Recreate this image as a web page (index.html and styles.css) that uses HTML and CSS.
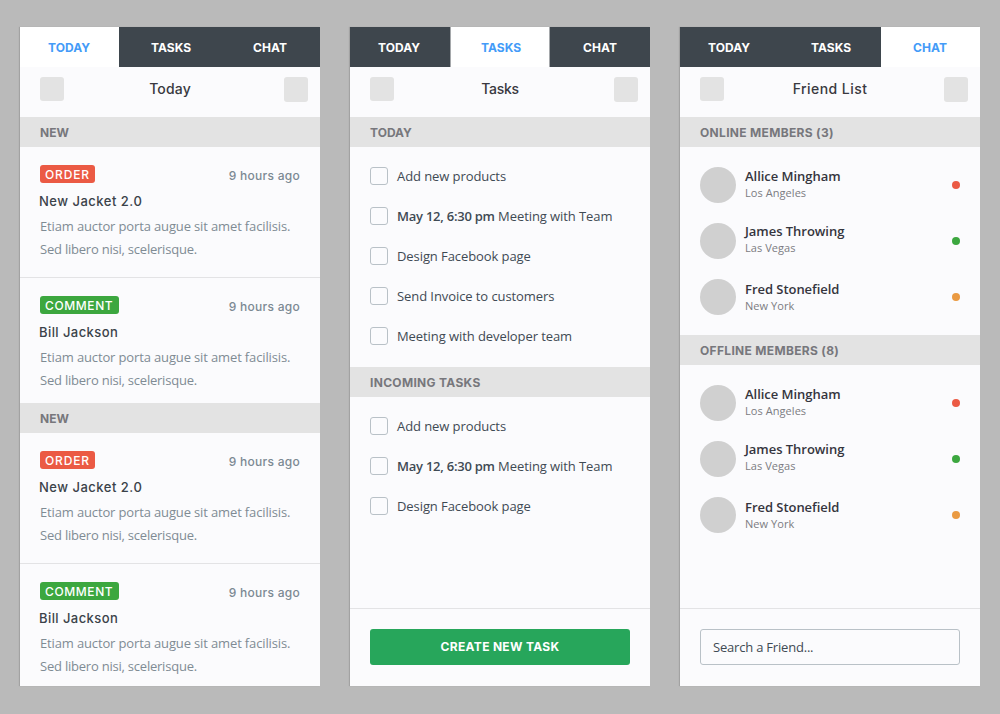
FILE: index.html
```
<!DOCTYPE html>
<html lang="en">
<head>
<meta charset="utf-8">
<title>Today, Tasks, Chat</title>
<link rel="stylesheet" href="styles.css">
</head>
<body>
<main class="board">
  <section class="panel">
    <nav class="tabs">
      <a class="tab tab-today active">TODAY</a><a class="tab tab-tasks">TASKS</a><a class="tab tab-chat">CHAT</a>
    </nav>
    <header class="bar"><span class="square"></span><h1 class="title">Today</h1><span class="square tall"></span></header>
    <h2 class="band">NEW</h2>
    <article class="note">
      <div class="note-head"><span class="badge order">ORDER</span><time class="time">9 hours ago</time></div>
      <h3 class="note-title">New Jacket 2.0</h3>
      <p class="text"><span class="line">Etiam auctor porta augue sit amet facilisis.</span><span class="line tight">Sed libero nisi, scelerisque.</span></p>
    </article>
    <article class="note last">
      <div class="note-head"><span class="badge comment">COMMENT</span><time class="time">9 hours ago</time></div>
      <h3 class="note-title person">Bill Jackson</h3>
      <p class="text"><span class="line">Etiam auctor porta augue sit amet facilisis.</span><span class="line tight">Sed libero nisi, scelerisque.</span></p>
    </article>
    <h2 class="band">NEW</h2>
    <article class="note">
      <div class="note-head"><span class="badge order">ORDER</span><time class="time">9 hours ago</time></div>
      <h3 class="note-title">New Jacket 2.0</h3>
      <p class="text"><span class="line">Etiam auctor porta augue sit amet facilisis.</span><span class="line tight">Sed libero nisi, scelerisque.</span></p>
    </article>
    <article class="note last">
      <div class="note-head"><span class="badge comment">COMMENT</span><time class="time">9 hours ago</time></div>
      <h3 class="note-title person">Bill Jackson</h3>
      <p class="text"><span class="line">Etiam auctor porta augue sit amet facilisis.</span><span class="line tight">Sed libero nisi, scelerisque.</span></p>
    </article>
  </section>

  <section class="panel">
    <nav class="tabs">
      <a class="tab tab-today">TODAY</a><a class="tab tab-tasks active">TASKS</a><a class="tab tab-chat">CHAT</a>
    </nav>
    <header class="bar"><span class="square"></span><h1 class="title title-tasks">Tasks</h1><span class="square tall"></span></header>
    <h2 class="band">TODAY</h2>
    <ul class="tasks">
      <li class="task"><span class="check"></span><span>Add new products</span></li>
      <li class="task"><span class="check"></span><span><b class="when">May 12, 6:30 pm</b> Meeting with Team</span></li>
      <li class="task"><span class="check"></span><span>Design Facebook page</span></li>
      <li class="task"><span class="check"></span><span>Send Invoice to customers</span></li>
      <li class="task"><span class="check"></span><span>Meeting with developer team</span></li>
    </ul>
    <h2 class="band long">INCOMING TASKS</h2>
    <ul class="tasks">
      <li class="task"><span class="check"></span><span>Add new products</span></li>
      <li class="task"><span class="check"></span><span><b class="when">May 12, 6:30 pm</b> Meeting with Team</span></li>
      <li class="task"><span class="check"></span><span>Design Facebook page</span></li>
    </ul>
    <footer class="footer"><button class="create" type="button">CREATE NEW TASK</button></footer>
  </section>

  <section class="panel">
    <nav class="tabs">
      <a class="tab tab-today">TODAY</a><a class="tab tab-tasks">TASKS</a><a class="tab tab-chat active">CHAT</a>
    </nav>
    <header class="bar"><span class="square"></span><h1 class="title title-friends">Friend List</h1><span class="square tall"></span></header>
    <h2 class="band long">ONLINE MEMBERS (3)</h2>
    <ul class="members">
      <li class="member"><span class="avatar"></span><div class="who"><div class="name">Allice Mingham</div><div class="city">Los Angeles</div></div><span class="dot red"></span></li>
      <li class="member"><span class="avatar"></span><div class="who raised"><div class="name">James Throwing</div><div class="city">Las Vegas</div></div><span class="dot green"></span></li>
      <li class="member"><span class="avatar"></span><div class="who lowered"><div class="name">Fred Stonefield</div><div class="city">New York</div></div><span class="dot orange"></span></li>
    </ul>
    <h2 class="band long">OFFLINE MEMBERS (8)</h2>
    <ul class="members">
      <li class="member"><span class="avatar"></span><div class="who"><div class="name">Allice Mingham</div><div class="city">Los Angeles</div></div><span class="dot red"></span></li>
      <li class="member"><span class="avatar"></span><div class="who raised"><div class="name">James Throwing</div><div class="city">Las Vegas</div></div><span class="dot green"></span></li>
      <li class="member"><span class="avatar"></span><div class="who lowered"><div class="name">Fred Stonefield</div><div class="city">New York</div></div><span class="dot orange"></span></li>
    </ul>
    <footer class="footer"><div class="search">Search a Friend...</div></footer>
  </section>
</main>
</body>
</html>
```
FILE: styles.css
```
* { box-sizing: border-box; }
body {
  margin: 0;
  background: #bababa;
  font: 13px/18px "Open Sans", sans-serif;
  color: #3f4a54;
}
h1, h2, h3, p, ul { margin: 0; padding: 0; list-style: none; }

.board {
  display: flex;
  gap: 30px;
  width: 1000px;
  height: 714px;
  padding: 27px 20px 28px;
  overflow: hidden;
}
.panel {
  display: flex;
  flex-direction: column;
  flex: 0 0 300px;
  height: 659px;
  background: #fbfbfd;
  box-shadow: -1px 0 1px rgba(0, 0, 0, .13);
}
.panel > * { flex-shrink: 0; }

.tabs, .title, .band, .badge, .time, .note-title, .create {
  font-family: Inter, sans-serif;
}

/* Tabs */
.tabs { display: flex; height: 40px; background: #3e464d; }
.tab {
  padding-top: 1px;
  font-size: 12px;
  font-weight: 700;
  line-height: 40px;
  letter-spacing: .05px;
  color: #fff;
}
.tab-today { width: 99px; padding-left: 28px; }
.tab-tasks { width: 102px; padding-left: 32px; }
.tab-chat { width: 99px; padding-left: 32px; }
.tab.active { background: #fff; color: #439bf8; }
.tab-tasks.active {
  width: 100px;
  margin: 0 1px 0 1px;
  padding-left: 30px;
  border: solid #a5a8ab;
  border-width: 0 1px;
}

/* Title row */
.bar {
  display: flex;
  justify-content: space-between;
  height: 50px;
  padding: 10px 12px 0 20px;
}
.square { width: 24px; height: 24px; border-radius: 3px; background: #e3e3e3; }
.square.tall { height: 25px; }
.title {
  flex: 1;
  padding-right: 8px;
  font-size: 14px;
  font-weight: 500;
  line-height: 24px;
  letter-spacing: .15px;
  text-align: center;
  color: #393940;
}
.title-tasks { letter-spacing: -.3px; }
.title-friends { letter-spacing: .45px; }

.band {
  height: 30px;
  padding: 1px 20px 0;
  background: #e3e3e3;
  font-size: 12px;
  font-weight: 700;
  line-height: 30px;
  color: #77777c;
}
.band.long { letter-spacing: .32px; }

/* Notes */
.note { padding: 18px 20px 16px; border-bottom: 1px solid #e3e3e5; }
.note.last { padding-bottom: 11px; border-bottom: 0; }
.note-head { display: flex; justify-content: space-between; height: 18px; }
.badge {
  height: 18px;
  padding: 1px 0 0 5px;
  border-radius: 3px;
  font-size: 12px;
  font-weight: 500;
  color: #fff;
}
.order { width: 55px; background: #eb5a44; letter-spacing: .85px; }
.comment { width: 79px; background: #3ca73f; letter-spacing: .6px; }
.time {
  padding-top: 2px;
  font-size: 12px;
  font-weight: 500;
  letter-spacing: .27px;
  color: #7c8993;
}
.note-title {
  margin: 8px 0 0 -1px;
  font-size: 13px;
  font-weight: 500;
  line-height: 20px;
  letter-spacing: .5px;
  color: #3a4249;
}
.note-title.person { letter-spacing: .42px; }
.text { margin-top: 4px; line-height: 23px; color: #7f8b94; }
.line { display: block; letter-spacing: -.14px; white-space: nowrap; }
.line.tight { letter-spacing: -.22px; }

/* Tasks */
.tasks { padding: 9px 20px 11px; letter-spacing: -.08px; }
.task { display: flex; align-items: center; gap: 9px; height: 40px; white-space: nowrap; }
.check { width: 18px; height: 18px; border: 1px solid #b9c1c7; border-radius: 3px; }
.when { font-weight: 600; letter-spacing: -.24px; }

/* Members */
.members { padding: 20px 20px 0; }
.member { display: flex; gap: 9px; height: 56px; }
.avatar { width: 36px; height: 36px; border-radius: 50%; background: #d0d0d0; }
.who { flex: 1; }
.who.raised { margin-top: -1px; }
.who.lowered { margin-top: 1px; }
.name { font-weight: 600; letter-spacing: -.04px; color: #35353d; }
.city { font-size: 11px; line-height: 16px; letter-spacing: .06px; color: #7c7c82; }
.dot { width: 8px; height: 8px; margin-top: 14px; border-radius: 50%; }
.red { background: #eb5a44; }
.green { background: #3ca73f; }
.orange { background: #ea9a42; }

/* Footer */
.footer {
  height: 78px;
  margin-top: auto;
  padding: 20px 20px 0;
  border-top: 1px solid #e3e3e5;
}
.create {
  display: block;
  width: 260px;
  height: 36px;
  padding: 0 0 1px;
  border: 0;
  border-radius: 3px;
  background: #27a65b;
  font-size: 12px;
  font-weight: 700;
  letter-spacing: .32px;
  color: #fff;
}
.search {
  height: 36px;
  padding-left: 12px;
  border: 1px solid #b9c1c7;
  border-radius: 3px;
  line-height: 34px;
  letter-spacing: -.2px;
}
```
